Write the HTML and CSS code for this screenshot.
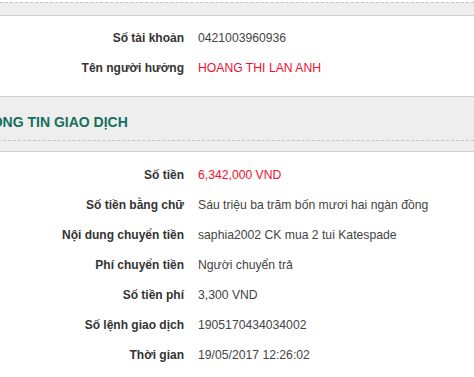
FILE: index.html
```html
<!DOCTYPE html>
<html lang="vi">
<head>
    <meta charset="UTF-8">
    <meta name="viewport" content="width=device-width, initial-scale=1.0">
    <title>Thông tin giao dịch</title>
    <link rel="stylesheet" href="styles.css">
</head>
<body>
    <div class="page">
        <div class="section-top"></div>

        <!-- Người hưởng -->
        <div class="panel">
            <div class="row">
                <div class="label">Số tài khoản</div>
                <div class="value">0421003960936</div>
            </div>
            <div class="row">
                <div class="label">Tên người hưởng</div>
                <div class="value red">HOANG THI LAN ANH</div>
            </div>
        </div>

        <!-- Giao dịch -->
        <div class="section-head">
            <h3>THÔNG TIN GIAO DỊCH</h3>
        </div>
        <div class="panel panel-second">
            <div class="row">
                <div class="label">Số tiền</div>
                <div class="value red">6,342,000 VND</div>
            </div>
            <div class="row">
                <div class="label">Số tiền bằng chữ</div>
                <div class="value">Sáu triệu ba trăm bốn mươi hai ngàn đồng</div>
            </div>
            <div class="row">
                <div class="label">Nội dung chuyển tiền</div>
                <div class="value">saphia2002 CK mua 2 tui Katespade</div>
            </div>
            <div class="row">
                <div class="label">Phí chuyển tiền</div>
                <div class="value">Người chuyển trả</div>
            </div>
            <div class="row">
                <div class="label">Số tiền phí</div>
                <div class="value">3,300 VND</div>
            </div>
            <div class="row">
                <div class="label">Số lệnh giao dịch</div>
                <div class="value">1905170434034002</div>
            </div>
            <div class="row">
                <div class="label">Thời gian</div>
                <div class="value">19/05/2017 12:26:02</div>
            </div>
        </div>
    </div>
</body>
</html>
```

FILE: styles.css
```css
body {
    margin: 0;
    padding: 0;
    background: #fff;
    font-family: "Liberation Sans", Arial, sans-serif;
    font-size: 12px;
    color: #333;
    overflow: hidden;
}

.section-top {
    height: 14px;
    background: #eee;
    border-bottom: 1px solid #cfcfcf;
    box-sizing: border-box;
}

.section-top::before {
    content: "";
    display: block;
    margin-top: 2px;
    border-top: 1px dashed #c4c4c4;
}

.panel {
    padding: 7px 0 13px;
    background: #fff;
}

.panel-second {
    padding-top: 8px;
}

.row {
    display: grid;
    grid-template-columns: 184px 1fr;
    column-gap: 14px;
    height: 30px;
    align-items: center;
}

.label {
    text-align: right;
    font-weight: bold;
    font-size: 12px;
    color: #333;
}

.value {
    color: #444;
    font-size: 12.2px;
    white-space: nowrap;
}

.red {
    color: #f0102e;
}

.section-head {
    background: #eee;
    border-top: 1px solid #cfcfcf;
    border-bottom: 1px solid #cfcfcf;
    height: 56px;
    box-sizing: border-box;
    padding-top: 15px;
}

.section-head h3 {
    margin: 0 0 0 -27px;
    font-size: 14px;
    line-height: 20px;
    color: #15705c;
    padding-bottom: 8px;
    border-bottom: 1px dashed #c4c4c4;
}
```
